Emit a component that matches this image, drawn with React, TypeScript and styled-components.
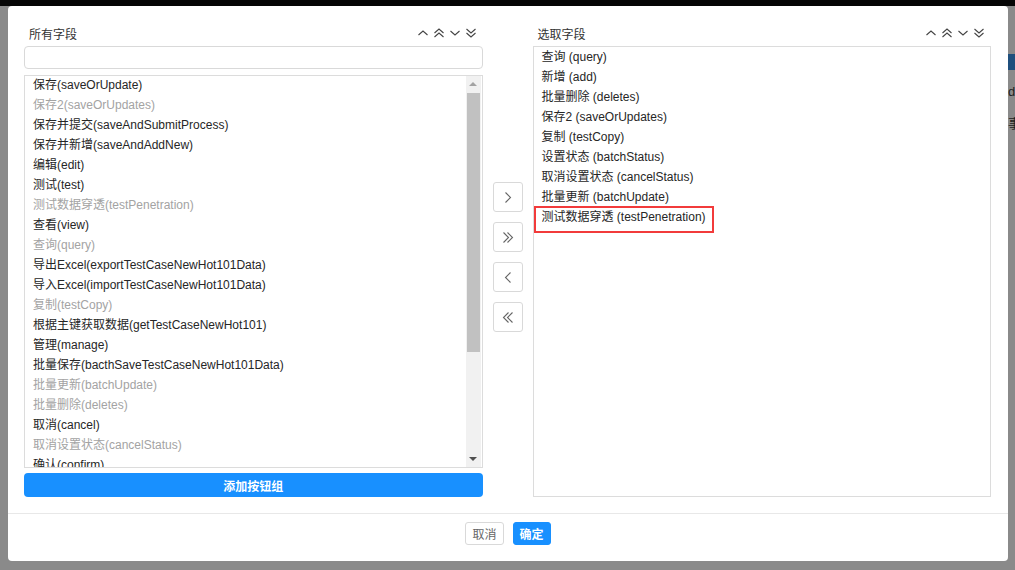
import React from "react";
import styled, { createGlobalStyle } from "styled-components";

const GlobalStyle = createGlobalStyle`
  html, body {
    margin: 0;
    padding: 0;
    background: #8a8a8a;
    font-family: "Liberation Sans", "Noto Sans CJK SC", sans-serif;
    font-size: 12px;
  }
`;

type Field = { label: string; disabled?: boolean };

const allFields: Field[] = [
  { label: "保存(saveOrUpdate)" },
  { label: "保存2(saveOrUpdates)", disabled: true },
  { label: "保存并提交(saveAndSubmitProcess)" },
  { label: "保存并新增(saveAndAddNew)" },
  { label: "编辑(edit)" },
  { label: "测试(test)" },
  { label: "测试数据穿透(testPenetration)", disabled: true },
  { label: "查看(view)" },
  { label: "查询(query)", disabled: true },
  { label: "导出Excel(exportTestCaseNewHot101Data)" },
  { label: "导入Excel(importTestCaseNewHot101Data)" },
  { label: "复制(testCopy)", disabled: true },
  { label: "根据主键获取数据(getTestCaseNewHot101)" },
  { label: "管理(manage)" },
  { label: "批量保存(bacthSaveTestCaseNewHot101Data)" },
  { label: "批量更新(batchUpdate)", disabled: true },
  { label: "批量删除(deletes)", disabled: true },
  { label: "取消(cancel)" },
  { label: "取消设置状态(cancelStatus)", disabled: true },
  { label: "确认(confirm)" },
];

const picked = [
  "查询 (query)",
  "新增 (add)",
  "批量删除 (deletes)",
  "保存2 (saveOrUpdates)",
  "复制 (testCopy)",
  "设置状态 (batchStatus)",
  "取消设置状态 (cancelStatus)",
  "批量更新 (batchUpdate)",
  "测试数据穿透 (testPenetration)",
];

function SortIcon({ kind }: { kind: "up" | "top" | "down" | "bottom" }) {
  const up = kind === "up" || kind === "top";
  const double = kind === "top" || kind === "bottom";
  const one = (y: number) =>
    up ? `M1.5 ${y + 4} L6 ${y} L10.5 ${y + 4}` : `M1.5 ${y} L6 ${y + 4} L10.5 ${y}`;
  return (
    <svg width="12" height="12" viewBox="0 0 12 12" fill="none" stroke="#444" strokeWidth="1.1">
      {double ? (
        <>
          <path d={one(2)} />
          <path d={one(6)} />
        </>
      ) : (
        <path d={one(4)} />
      )}
    </svg>
  );
}

function MoveIcon({ dir, double }: { dir: "right" | "left"; double?: boolean }) {
  const one = (x: number) =>
    dir === "right" ? `M${x} 2.5 L${x + 5} 7.5 L${x} 12.5` : `M${x + 5} 2.5 L${x} 7.5 L${x + 5} 12.5`;
  return (
    <svg width="14" height="15" viewBox="0 0 14 15" fill="none" stroke="#666" strokeWidth="1.1">
      {double ? (
        <>
          <path d={one(2.5)} />
          <path d={one(6.5)} />
        </>
      ) : (
        <path d={one(4.5)} />
      )}
    </svg>
  );
}

function SortTools() {
  return (
    <Tools>
      <SortIcon kind="up" />
      <SortIcon kind="top" />
      <SortIcon kind="down" />
      <SortIcon kind="bottom" />
    </Tools>
  );
}

export default function App() {
  return (
    <>
      <GlobalStyle />
      <TopStrip />
      <BehindPage>
        <SideBlock $color="#1f4f7d" />
        <SideText>d</SideText>
        <SideText>事</SideText>
      </BehindPage>

      <Modal>
        <Body>
          <Panel>
            <PanelHead>
              <span>所有字段</span>
              <SortTools />
            </PanelHead>
            <Search />
            <ListBox $grow>
              <Items $shift={-1}>
                {allFields.map((f) => (
                  <Item key={f.label} $disabled={f.disabled}>
                    {f.label}
                  </Item>
                ))}
              </Items>
              <ScrollTrack>
                <ScrollArrow $up />
                <ScrollThumb />
                <ScrollArrow />
              </ScrollTrack>
            </ListBox>
            <AddButton>添加按钮组</AddButton>
          </Panel>

          <Mover>
            <MoveButton>
              <MoveIcon dir="right" />
            </MoveButton>
            <MoveButton>
              <MoveIcon dir="right" double />
            </MoveButton>
            <MoveButton>
              <MoveIcon dir="left" />
            </MoveButton>
            <MoveButton>
              <MoveIcon dir="left" double />
            </MoveButton>
          </Mover>

          <Panel>
            <PanelHead>
              <span>选取字段</span>
              <SortTools />
            </PanelHead>
            <ListBox $grow>
              <Items>
                {picked.map((p, i) => (
                  <Item key={p} $marked={i === picked.length - 1}>
                    {p}
                  </Item>
                ))}
              </Items>
            </ListBox>
          </Panel>
        </Body>

        <Footer>
          <FooterButton>取消</FooterButton>
          <FooterButton $primary>确定</FooterButton>
        </Footer>
      </Modal>
    </>
  );
}

const TopStrip = styled.div`
  height: 6px;
  background: #050505;
`;

const BehindPage = styled.div`
  height: 564px;
  display: flex;
  flex-direction: column;
  align-items: flex-end;
  padding-top: 48px;
  gap: 14px;
  box-sizing: border-box;
`;

const SideBlock = styled.div<{ $color: string }>`
  width: 7px;
  height: 16px;
  background: ${({ $color }) => $color};
`;

const SideText = styled.div`
  width: 7px;
  overflow: hidden;
  color: #222;
  font-size: 13px;
`;

const Modal = styled.div`
  position: absolute;
  top: 6px;
  left: 8px;
  width: 1000px;
  height: 555px;
  background: #fff;
  border-radius: 4px;
  display: flex;
  flex-direction: column;
`;

const Body = styled.div`
  display: flex;
  gap: 10px;
  padding: 19px 17px 15px 16px;
  height: 472px;
`;

const Panel = styled.div`
  width: 459px;
  display: flex;
  flex-direction: column;
`;

const PanelHead = styled.div`
  height: 16px;
  display: flex;
  align-items: center;
  justify-content: space-between;
  padding: 0 6px 0 5px;
  margin-bottom: 5px;
  color: #333;
  font-size: 12px;
`;

const Tools = styled.div`
  display: flex;
  gap: 4px;
`;

const Search = styled.div`
  height: 21px;
  border: 1px solid #d9d9d9;
  border-radius: 4px;
  margin-bottom: 6px;
`;

const ListBox = styled.div<{ $grow?: boolean }>`
  flex: ${({ $grow }) => ($grow ? 1 : "none")};
  min-height: 0;
  border: 1px solid #dcdcdc;
  display: flex;
  overflow: hidden;
`;

const Items = styled.div<{ $shift?: number }>`
  flex: 1;
  overflow: hidden;
  margin-top: ${({ $shift }) => $shift ?? 0}px;
`;

const Item = styled.div<{ $disabled?: boolean; $marked?: boolean }>`
  position: relative;
  height: 20px;
  line-height: 20px;
  padding-left: 8px;
  white-space: nowrap;
  color: ${({ $disabled }) => ($disabled ? "#a3a3a3" : "#262626")};

  ${({ $marked }) =>
    $marked &&
    `
    &::after {
      content: "";
      position: absolute;
      left: 0;
      top: -1px;
      width: 180px;
      height: 27px;
      box-sizing: border-box;
      border: 2px solid #f23b3b;
    }
  `}
`;

const ScrollTrack = styled.div`
  width: 15px;
  margin-right: 1px;
  background: #f1f1f1;
  display: flex;
  flex-direction: column;
`;

const ScrollArrow = styled.div<{ $up?: boolean }>`
  height: 16px;
  display: flex;
  align-items: center;
  justify-content: center;

  &::before {
    content: "";
    border-left: 4px solid transparent;
    border-right: 4px solid transparent;
    ${({ $up }) => ($up ? "border-bottom: 4px solid #a3a3a3;" : "border-top: 4px solid #505050;")}
  }
`;

const ScrollThumb = styled.div`
  height: 259px;
  margin: 1px 1px auto;
  background: #c1c1c1;
`;

const AddButton = styled.button`
  margin-top: 5px;
  height: 24px;
  border: none;
  border-radius: 4px;
  background: #1890ff;
  color: #fff;
  font-family: inherit;
  font-size: 12px;
  font-weight: bold;
  padding: 0;
`;

const Mover = styled.div`
  width: 30px;
  display: flex;
  flex-direction: column;
  justify-content: center;
  gap: 10px;
  padding-bottom: 8px;
`;

const MoveButton = styled.button`
  width: 30px;
  height: 30px;
  padding: 0;
  border: 1px solid #d9d9d9;
  border-radius: 3px;
  background: #fff;
  display: flex;
  align-items: center;
  justify-content: center;
`;

const Footer = styled.div`
  border-top: 1px solid #e8e8e8;
  display: flex;
  justify-content: center;
  gap: 9px;
  padding-top: 8px;
  margin-top: 1px;
`;

const FooterButton = styled.button<{ $primary?: boolean }>`
  height: 23px;
  padding: 0 6px;
  border-radius: 3px;
  font-family: inherit;
  font-size: 12px;
  border: 1px solid ${({ $primary }) => ($primary ? "#1890ff" : "#d9d9d9")};
  background: ${({ $primary }) => ($primary ? "#1890ff" : "#fff")};
  color: ${({ $primary }) => ($primary ? "#fff" : "#666")};
  font-weight: ${({ $primary }) => ($primary ? "bold" : "normal")};
`;
